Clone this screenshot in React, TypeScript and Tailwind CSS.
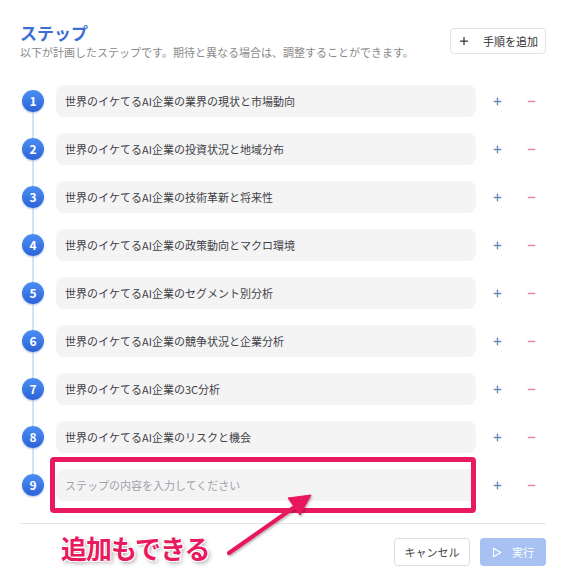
import { Plus, Minus } from 'lucide-react';

const steps = [
    '世界のイケてるAI企業の業界の現状と市場動向',
    '世界のイケてるAI企業の投資状況と地域分布',
    '世界のイケてるAI企業の技術革新と将来性',
    '世界のイケてるAI企業の政策動向とマクロ環境',
    '世界のイケてるAI企業のセグメント別分析',
    '世界のイケてるAI企業の競争状況と企業分析',
    '世界のイケてるAI企業の3C分析',
    '世界のイケてるAI企業のリスクと機会',
    '',
];

const font = "font-['Noto_Sans_CJK_JP','Noto_Sans',sans-serif]";

function StepRow({ index, text, last }: { index: number; text: string; last: boolean }) {
    return (
        <div className="relative flex h-8 items-center">
            <div className="relative ml-[2px] flex h-[22px] w-[22px] flex-shrink-0 items-center justify-center">
                {!last && (
                    <div className="absolute left-[10px] top-[11px] h-[48px] w-[2px] bg-[#d3e2f7]" />
                )}
                <div className="relative z-10 flex h-[22px] w-[22px] items-center justify-center rounded-full bg-gradient-to-b from-[#4d8ff2] to-[#2c62d6] text-[12px] font-bold text-white shadow-[0_1px_2px_rgba(30,80,180,0.35)]">
                    {index}
                </div>
            </div>
            <div className="ml-[12px] flex h-8 flex-1 items-center rounded-lg bg-[#f4f4f5] px-[9px] text-[11px]">
                {text ? (
                    <span className="text-[#3f3f46]">{text}</span>
                ) : (
                    <span className="text-[#a1a1aa]">ステップの内容を入力してください</span>
                )}
            </div>
            <div className="flex w-[70px] flex-shrink-0 items-center">
                <button className="ml-[11px] flex h-5 w-5 items-center justify-center text-[#6a8cbd]">
                    <Plus size={11} strokeWidth={3} />
                </button>
                <button className="ml-[14px] flex h-5 w-5 items-center justify-center text-[#e0909f]">
                    <Minus size={11} strokeWidth={3} />
                </button>
            </div>
            {last && (
                <div className="pointer-events-none absolute left-[30px] right-[70px] top-[-12px] bottom-[-12px] rounded-[4px] border-[5px] border-[#e8195e]" />
            )}
        </div>
    );
}

export default function App() {
    return (
        <div className={`relative h-[585px] w-[562px] overflow-hidden bg-white pl-[20px] pr-[16px] pt-[21px] ${font}`}>
            <div className="flex items-start justify-between">
                <div>
                    <h2 className="text-[17px] font-bold leading-[24px] text-[#3b6fd4]">ステップ</h2>
                    <p className="text-[11px] leading-[14px] text-[#8a8a8a]">
                        以下が計画したステップです。期待と異なる場合は、調整することができます。
                    </p>
                </div>
                <button className="mt-[7px] flex h-[26px] w-[96px] items-center justify-center gap-[13px] rounded border border-[#e2e2e2] bg-white text-[11px] text-[#333]">
                    <Plus size={12} strokeWidth={2.5} />
                    <span>手順を追加</span>
                </button>
            </div>

            <div className="mt-[26px] flex flex-col gap-4">
                {steps.map((s, i) => (
                    <StepRow key={i} index={i + 1} text={s} last={i === steps.length - 1} />
                ))}
            </div>

            <div className="mt-[22px] h-px bg-[#e5e5e5]" />

            <div className="mt-[14px] flex justify-end gap-[10px]">
                <button className="flex h-[28px] w-[76px] items-center justify-center rounded border border-[#dedede] bg-white text-[11px] text-[#444]">
                    キャンセル
                </button>
                <button className="flex h-[28px] w-[66px] items-center justify-center gap-[10px] rounded bg-[#a7c2f2] text-[11px] text-white">
                    <svg width="10" height="11" viewBox="0 0 10 11" fill="none">
                        <path d="M1.5 1.2 L8.8 5.5 L1.5 9.8 Z" stroke="white" strokeWidth="1.2" strokeLinejoin="round" />
                    </svg>
                    <span>実行</span>
                </button>
            </div>

            {/* annotation */}
            <div className="pointer-events-none absolute left-[61px] top-[533px] text-[26px] font-bold leading-[30px] tracking-[-1px] text-[#e8195e] [text-shadow:1px_1px_0_#fff,-1px_-1px_0_#fff,1px_-1px_0_#fff,-1px_1px_0_#fff,2px_2px_4px_rgba(0,0,0,0.4)]">
                追加もできる
            </div>
            <svg className="pointer-events-none absolute left-0 top-0" width="562" height="585">
                <defs>
                    <filter id="sh" x="-20%" y="-20%" width="140%" height="140%">
                        <feDropShadow dx="1" dy="1.5" stdDeviation="1.2" floodColor="#000" floodOpacity="0.3" />
                    </filter>
                </defs>
                <g filter="url(#sh)" fill="#e8195e" stroke="#e8195e">
                    <line x1="229" y1="553" x2="296" y2="506" strokeWidth="4" strokeLinecap="round" />
                    <polygon points="311,495 288,498 300,515" strokeWidth="1" strokeLinejoin="round" />
                </g>
            </svg>
        </div>
    );
}
